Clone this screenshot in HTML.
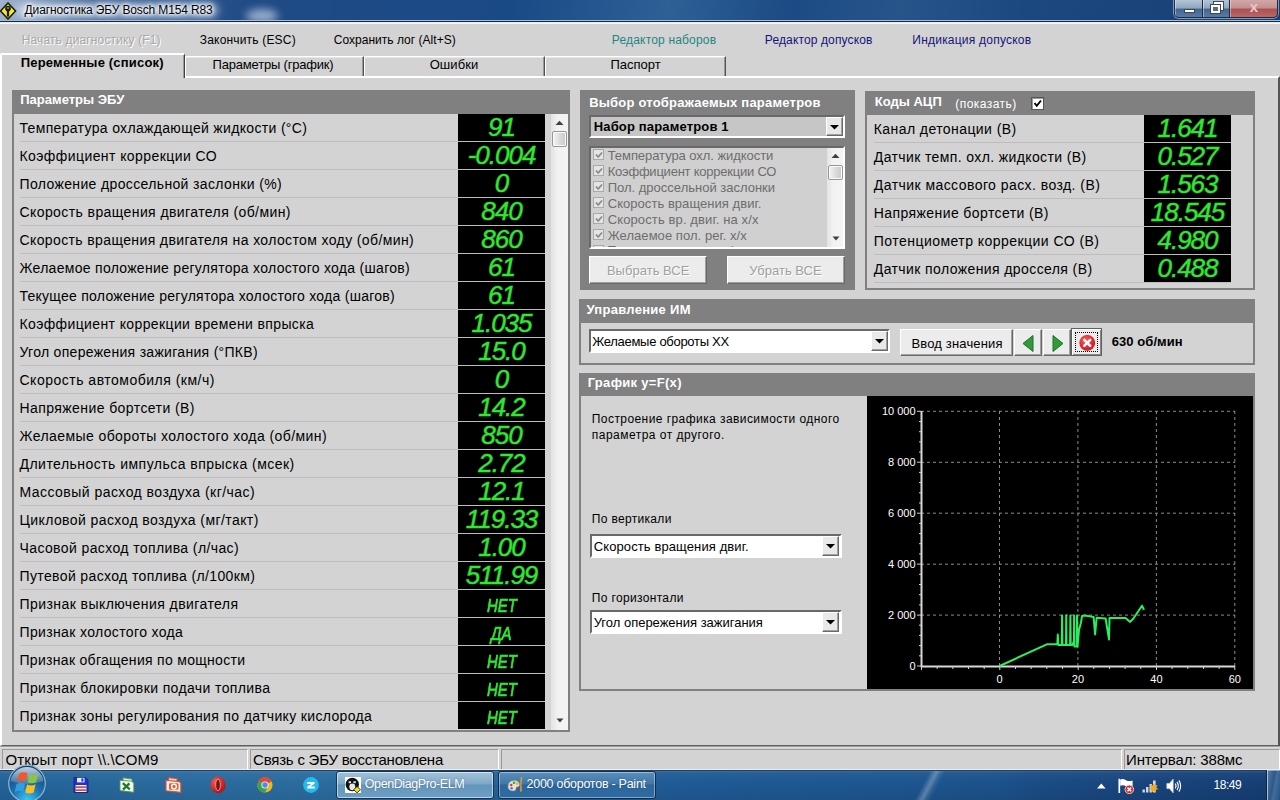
<!DOCTYPE html>
<html lang="ru">
<head>
<meta charset="utf-8">
<title>Диагностика ЭБУ Bosch M154 R83</title>
<style>
*{box-sizing:border-box;margin:0;padding:0}
html,body{width:1280px;height:800px;overflow:hidden;background:#d3d3d3;font-family:"Liberation Sans",sans-serif;font-size:14px;color:#000}
.a{position:absolute;display:block}
.t{position:absolute;white-space:nowrap}
#titlebar{left:0;top:0;width:1280px;height:20px;overflow:hidden;background:linear-gradient(100deg,#a3b4cc 0%,#8099bb 2.5%,#3d6294 7%,#1f4a85 20%,#1a4a86 40%,#2e6096 52%,#1c4a84 62%,#27558a 70%,#1c4880 80%,#173f73 100%)}
#wbtns{left:1174px;top:0;width:104px;height:18px;border:1px solid #1d2c40;border-top:0;border-radius:0 0 5px 5px;overflow:hidden;box-shadow:0 0 0 1px rgba(255,255,255,.45)}
.wb{top:0;height:18px;background:linear-gradient(#b4c4d6 0,#8ea6c0 45%,#44658f 50%,#5a7da6 100%);border-right:1px solid #1d2c40;box-shadow:inset 1px 0 0 rgba(255,255,255,.4)}
.wb.wc{background:linear-gradient(#d2a8a8 0,#c48e8e 45%,#ad5050 50%,#b96a6a 100%);border-right:0}
.val{height:27px;background:#000;color:#2fe82f;text-align:center;font-style:italic;font-size:26px;line-height:27px;letter-spacing:-1px;-webkit-text-stroke:.45px #2fe82f;white-space:nowrap;overflow:hidden}
.val .w{display:inline-block;font-size:18px;line-height:28px;letter-spacing:0;transform:scaleX(.83);position:relative;top:0;left:0;-webkit-text-stroke:.7px #2fe82f}
.ct{font:11px "Liberation Sans",sans-serif;fill:#fff}
#taskbar{left:0;top:769px;width:1280px;height:31px;border-top:1px solid #e8eef4;background:linear-gradient(#1b4366 0,#1b4366 1px,rgba(255,255,255,.12) 1px,rgba(255,255,255,.04) 3px,rgba(0,0,0,0) 12px,rgba(0,0,0,.08) 100%),linear-gradient(90deg,#236398 0,#2a6a9e 12%,#2b6c9f 25%,#24629b 40%,#1f5a95 55%,#1d5690 70%,#1c528b 78%,#1b4c85 81%,#18447c 90%,#163e74 100%)}

</style>
</head>
<body>
<div id="titlebar" class="a">
<div class="a" style="left:14px;top:3px;width:204px;height:15px;background:rgba(225,236,250,.62);filter:blur(5px);border-radius:8px"></div>
<div class="a" style="left:246px;top:9px;width:32px;height:14px;background:rgba(225,232,246,.62);filter:blur(4px);border-radius:50%"></div>
<span class="t" style='left:24.6px;top:2.4px;font-size:12px;line-height:16px;letter-spacing:-0.14px;text-shadow:0 0 5px #fff,0 0 5px #fff,0 0 8px #fff,0 0 3px #fff;'>Диагностика ЭБУ Bosch M154 R83</span>
<svg class="a" style="left:0;top:2px" width="17" height="18" viewBox="0 0 17 18"><path d="M8 1 L15.6 9 L8 17 L0.5 9 Z" fill="#f6ea1e" stroke="#151515" stroke-width="1.5"/><circle cx="8" cy="6.6" r="2.8" fill="#151515"/><path d="M8 8 V14.6" stroke="#151515" stroke-width="2.2"/><path d="M6.9 6 H9.1" stroke="#f6ea1e" stroke-width="1"/></svg>
<div class="a" id="wbtns"><div class="a wb" style="left:0;width:28px"><i class="a" style="left:9px;top:9px;width:11px;height:4px;background:#fff;border:1px solid #3a4a5a"></i></div><div class="a wb" style="left:28px;width:27px"><i class="a" style="left:11px;top:2px;width:9px;height:8px;border:2px solid #fff;outline:1px solid #3a4a5a"></i><i class="a" style="left:8px;top:5px;width:9px;height:8px;border:2px solid #fff;background:#54708f;outline:1px solid #3a4a5a"></i></div><div class="a wb wc" style="left:55px;width:48px"><span class="a" style="left:0;width:48px;top:-3px;text-align:center;font:bold 15px/20px 'Liberation Sans',sans-serif;color:#e8c8c8">x</span></div></div>
</div>
<div class="a" style="left:0;top:20px;width:1280px;height:1px;background:#9dbbdb"></div>
<div class="a" style="left:0;top:21px;width:1280px;height:1px;background:#1c2a3c"></div>
<div class="a" style="left:0;top:22px;width:1280px;height:2px;background:linear-gradient(#e6e6e6,#fbfbfb)"></div>
<span class="t" style='left:21.7px;top:32.1px;font-size:12px;line-height:16px;color:#a8a8a8;letter-spacing:0.14px;text-shadow:1px 1px 0 #fff;'>Начать диагностику (F1)</span>
<span class="t" style='left:199.8px;top:32.1px;font-size:12px;line-height:16px;letter-spacing:0.18px;'>Закончить (ESC)</span>
<span class="t" style='left:333.8px;top:32.1px;font-size:12px;line-height:16px;letter-spacing:0.02px;'>Сохранить лог (Alt+S)</span>
<span class="t" style='left:611.8px;top:32.1px;font-size:12px;line-height:16px;color:#1f8686;letter-spacing:0.18px;'>Редактор наборов</span>
<span class="t" style='left:764.8px;top:32.1px;font-size:12px;line-height:16px;color:#14147a;letter-spacing:0.13px;'>Редактор допусков</span>
<span class="t" style='left:912.3px;top:32.1px;font-size:12px;line-height:16px;color:#14147a;letter-spacing:0.22px;'>Индикация допусков</span>
<div class="a" style="left:0px;top:76px;width:1280px;height:670px;border-top:2px solid #fff;border-left:2px solid #fff;border-right:2px solid #555;border-bottom:1px solid #606060;"></div>
<div class="a" style="left:0px;top:746px;width:1280px;height:2px;background:#dedede;border-top:1px solid #9c9c9c"></div>
<div class="a" style="left:185px;top:56px;width:179px;height:20px;border-top:1px solid #fff;border-left:1px solid #fff;border-right:1px solid #505050;box-shadow:inset -1px 0 0 #9a9a9a,inset 0 1px 0 #e6e6e6;"></div>
<span class="t" style='left:212.5px;top:56.3px;font-size:13px;line-height:17px;letter-spacing:-0.19px;'>Параметры (график)</span>
<div class="a" style="left:364px;top:56px;width:181px;height:20px;border-top:1px solid #fff;border-left:1px solid #fff;border-right:1px solid #505050;box-shadow:inset -1px 0 0 #9a9a9a,inset 0 1px 0 #e6e6e6;"></div>
<span class="t" style='left:429.7px;top:56.3px;font-size:13px;line-height:17px;letter-spacing:0.06px;'>Ошибки</span>
<div class="a" style="left:545px;top:56px;width:181px;height:20px;border-top:1px solid #fff;border-left:1px solid #fff;border-right:1px solid #505050;box-shadow:inset -1px 0 0 #9a9a9a,inset 0 1px 0 #e6e6e6;"></div>
<span class="t" style='left:610.5px;top:56.3px;font-size:13px;line-height:17px;'>Паспорт</span>
<div class="a" style="left:0px;top:53px;width:185px;height:25px;background:#d3d3d3;border-top:2px solid #fff;border-left:2px solid #fff;border-right:1px solid #404040;box-shadow:inset -1px 0 0 #9a9a9a;border-radius:2px 2px 0 0"></div>
<span class="t" style='left:20.8px;top:54.0px;font-size:13px;line-height:17px;font-weight:bold;letter-spacing:0.18px;'>Переменные (список)</span>
<div class="a" style="left:12px;top:90px;width:558px;height:642px;border:2px solid #808080;"></div>
<div class="a" style="left:12px;top:90px;width:558px;height:24px;background:#808080;"></div>
<span class="t" style='left:20.2px;top:91.0px;font-size:13px;line-height:17px;font-weight:bold;color:#fff;letter-spacing:0.02px;'>Параметры ЭБУ</span>
<span class="t" style='left:19.5px;top:118.8px;font-size:14px;line-height:18px;letter-spacing:0.33px;'>Температура охлаждающей жидкости (°C)</span>
<div class="a" style="left:20px;top:141px;width:525px;height:1px;background:#bdbdbd"></div>
<div class="a val" style="left:458px;top:114px;width:87px">91</div>
<span class="t" style='left:19.5px;top:146.8px;font-size:14px;line-height:18px;letter-spacing:0.42px;'>Коэффициент коррекции СО</span>
<div class="a" style="left:20px;top:169px;width:525px;height:1px;background:#bdbdbd"></div>
<div class="a val" style="left:458px;top:142px;width:87px">-0.004</div>
<span class="t" style='left:19.5px;top:174.8px;font-size:14px;line-height:18px;letter-spacing:0.36px;'>Положение дроссельной заслонки (%)</span>
<div class="a" style="left:20px;top:197px;width:525px;height:1px;background:#bdbdbd"></div>
<div class="a val" style="left:458px;top:170px;width:87px">0</div>
<span class="t" style='left:19.5px;top:202.8px;font-size:14px;line-height:18px;letter-spacing:0.41px;'>Скорость вращения двигателя (об/мин)</span>
<div class="a" style="left:20px;top:225px;width:525px;height:1px;background:#bdbdbd"></div>
<div class="a val" style="left:458px;top:198px;width:87px">840</div>
<span class="t" style='left:19.5px;top:230.8px;font-size:14px;line-height:18px;letter-spacing:0.38px;'>Скорость вращения двигателя на холостом ходу (об/мин)</span>
<div class="a" style="left:20px;top:253px;width:525px;height:1px;background:#bdbdbd"></div>
<div class="a val" style="left:458px;top:226px;width:87px">860</div>
<span class="t" style='left:19.5px;top:258.8px;font-size:14px;line-height:18px;letter-spacing:0.29px;'>Желаемое положение регулятора холостого хода (шагов)</span>
<div class="a" style="left:20px;top:281px;width:525px;height:1px;background:#bdbdbd"></div>
<div class="a val" style="left:458px;top:254px;width:87px">61</div>
<span class="t" style='left:19.5px;top:286.8px;font-size:14px;line-height:18px;letter-spacing:0.26px;'>Текущее положение регулятора холостого хода (шагов)</span>
<div class="a" style="left:20px;top:309px;width:525px;height:1px;background:#bdbdbd"></div>
<div class="a val" style="left:458px;top:282px;width:87px">61</div>
<span class="t" style='left:19.5px;top:314.8px;font-size:14px;line-height:18px;letter-spacing:0.38px;'>Коэффициент коррекции времени впрыска</span>
<div class="a" style="left:20px;top:337px;width:525px;height:1px;background:#bdbdbd"></div>
<div class="a val" style="left:458px;top:310px;width:87px">1.035</div>
<span class="t" style='left:19.5px;top:342.8px;font-size:14px;line-height:18px;letter-spacing:0.30px;'>Угол опережения зажигания (°ПКВ)</span>
<div class="a" style="left:20px;top:365px;width:525px;height:1px;background:#bdbdbd"></div>
<div class="a val" style="left:458px;top:338px;width:87px">15.0</div>
<span class="t" style='left:19.5px;top:370.8px;font-size:14px;line-height:18px;letter-spacing:0.50px;'>Скорость автомобиля (км/ч)</span>
<div class="a" style="left:20px;top:393px;width:525px;height:1px;background:#bdbdbd"></div>
<div class="a val" style="left:458px;top:366px;width:87px">0</div>
<span class="t" style='left:19.5px;top:398.8px;font-size:14px;line-height:18px;letter-spacing:0.42px;'>Напряжение бортсети (В)</span>
<div class="a" style="left:20px;top:421px;width:525px;height:1px;background:#bdbdbd"></div>
<div class="a val" style="left:458px;top:394px;width:87px">14.2</div>
<span class="t" style='left:19.5px;top:426.8px;font-size:14px;line-height:18px;letter-spacing:0.42px;'>Желаемые обороты холостого хода (об/мин)</span>
<div class="a" style="left:20px;top:449px;width:525px;height:1px;background:#bdbdbd"></div>
<div class="a val" style="left:458px;top:422px;width:87px">850</div>
<span class="t" style='left:19.5px;top:454.8px;font-size:14px;line-height:18px;letter-spacing:0.47px;'>Длительность импульса впрыска (мсек)</span>
<div class="a" style="left:20px;top:477px;width:525px;height:1px;background:#bdbdbd"></div>
<div class="a val" style="left:458px;top:450px;width:87px">2.72</div>
<span class="t" style='left:19.5px;top:482.8px;font-size:14px;line-height:18px;letter-spacing:0.46px;'>Массовый расход воздуха (кг/час)</span>
<div class="a" style="left:20px;top:505px;width:525px;height:1px;background:#bdbdbd"></div>
<div class="a val" style="left:458px;top:478px;width:87px">12.1</div>
<span class="t" style='left:19.5px;top:510.8px;font-size:14px;line-height:18px;letter-spacing:0.41px;'>Цикловой расход воздуха (мг/такт)</span>
<div class="a" style="left:20px;top:533px;width:525px;height:1px;background:#bdbdbd"></div>
<div class="a val" style="left:458px;top:506px;width:87px">119.33</div>
<span class="t" style='left:19.5px;top:538.8px;font-size:14px;line-height:18px;letter-spacing:0.39px;'>Часовой расход топлива (л/час)</span>
<div class="a" style="left:20px;top:561px;width:525px;height:1px;background:#bdbdbd"></div>
<div class="a val" style="left:458px;top:534px;width:87px">1.00</div>
<span class="t" style='left:19.5px;top:566.8px;font-size:14px;line-height:18px;letter-spacing:0.37px;'>Путевой расход топлива (л/100км)</span>
<div class="a" style="left:20px;top:589px;width:525px;height:1px;background:#bdbdbd"></div>
<div class="a val" style="left:458px;top:562px;width:87px">511.99</div>
<span class="t" style='left:19.5px;top:594.8px;font-size:14px;line-height:18px;letter-spacing:0.43px;'>Признак выключения двигателя</span>
<div class="a" style="left:20px;top:617px;width:525px;height:1px;background:#bdbdbd"></div>
<div class="a val"  style="left:458px;top:590px;width:87px"><span class="w">НЕТ</span></div>
<span class="t" style='left:19.5px;top:622.8px;font-size:14px;line-height:18px;letter-spacing:0.36px;'>Признак холостого хода</span>
<div class="a" style="left:20px;top:645px;width:525px;height:1px;background:#bdbdbd"></div>
<div class="a val"  style="left:458px;top:618px;width:87px"><span class="w">ДА</span></div>
<span class="t" style='left:19.5px;top:650.8px;font-size:14px;line-height:18px;letter-spacing:0.30px;'>Признак обгащения по мощности</span>
<div class="a" style="left:20px;top:673px;width:525px;height:1px;background:#bdbdbd"></div>
<div class="a val"  style="left:458px;top:646px;width:87px"><span class="w">НЕТ</span></div>
<span class="t" style='left:19.5px;top:678.8px;font-size:14px;line-height:18px;letter-spacing:0.38px;'>Признак блокировки подачи топлива</span>
<div class="a" style="left:20px;top:701px;width:525px;height:1px;background:#bdbdbd"></div>
<div class="a val"  style="left:458px;top:674px;width:87px"><span class="w">НЕТ</span></div>
<span class="t" style='left:19.5px;top:706.8px;font-size:14px;line-height:18px;letter-spacing:0.35px;'>Признак зоны регулирования по датчику кислорода</span>
<div class="a val"  style="left:458px;top:702px;width:87px"><span class="w">НЕТ</span></div>
<div class="a" style="left:551px;top:114px;width:17px;height:616px;background:linear-gradient(90deg,#e3e3e3,#f2f2f2 40%,#f4f4f4);"></div>
<div class="a" style="left:552px;top:131px;width:15px;height:16px;border:1px solid #979797;border-radius:2px;background:linear-gradient(90deg,#f3f3f3,#dcdcdc 50%,#c9c9c9);box-shadow:inset 0 0 0 1px #fafafa"></div>
<svg class="a" style="left:555px;top:120px" width="9" height="5"><path d="M0.5 5 L4.5 0.8 L8.5 5Z" fill="#404040"/></svg>
<svg class="a" style="left:556px;top:718px" width="8" height="5"><path d="M0.5 0.5 L7.5 0.5 L4 4.5Z" fill="#404040"/></svg>
<div class="a" style="left:580px;top:90px;width:275px;height:200px;background:#808080;"></div>
<span class="t" style='left:589.2px;top:94.0px;font-size:13px;line-height:17px;font-weight:bold;color:#fff;letter-spacing:0.21px;'>Выбор отображаемых параметров</span>
<div class="a" style="left:589px;top:115px;width:256px;height:23px;background:#c6c6c6;border:2px solid;border-color:#696969 #fff #fff #696969;"></div>
<span class="t" style='left:593.7px;top:117.6px;font-size:13px;line-height:17px;font-weight:bold;letter-spacing:0.16px;'>Набор параметров 1</span>
<div class="a" style="left:826px;top:117px;width:17px;height:19px;background:#e9e9e9;border:1px solid;border-color:#fff #6a6a6a #6a6a6a #fff;box-shadow:inset -1px -1px 0 #a0a0a0"><svg class="a" style="left:3px;top:7px" width="9" height="5"><path d="M0 0H9L4.5 4.6Z" fill="#000"/></svg></div>
<div class="a" style="left:589px;top:146px;width:256px;height:103px;background:#d0d0d0;border:2px solid;border-color:#696969 #fff #fff #696969;overflow:hidden"></div>
<div class="a" style="left:593px;top:149px;width:11px;height:11px;background:#e4e4e4;border:1px solid #a8a8a8"><svg class="a" style="left:1px;top:1px" width="8" height="8"><path d="M1 3.5 L3.2 6 L7 1.5" fill="none" stroke="#8a8a8a" stroke-width="1.7"/></svg></div>
<span class="t" style='left:607.7px;top:146.6px;font-size:13px;line-height:17px;color:#6d6d6d;letter-spacing:-0.06px;'>Температура охл. жидкости</span>
<div class="a" style="left:593px;top:165px;width:11px;height:11px;background:#e4e4e4;border:1px solid #a8a8a8"><svg class="a" style="left:1px;top:1px" width="8" height="8"><path d="M1 3.5 L3.2 6 L7 1.5" fill="none" stroke="#8a8a8a" stroke-width="1.7"/></svg></div>
<span class="t" style='left:607.7px;top:162.6px;font-size:13px;line-height:17px;color:#6d6d6d;letter-spacing:-0.23px;'>Коэффициент коррекции СО</span>
<div class="a" style="left:593px;top:181px;width:11px;height:11px;background:#e4e4e4;border:1px solid #a8a8a8"><svg class="a" style="left:1px;top:1px" width="8" height="8"><path d="M1 3.5 L3.2 6 L7 1.5" fill="none" stroke="#8a8a8a" stroke-width="1.7"/></svg></div>
<span class="t" style='left:607.7px;top:178.6px;font-size:13px;line-height:17px;color:#6d6d6d;'>Пол. дроссельной заслонки</span>
<div class="a" style="left:593px;top:197px;width:11px;height:11px;background:#e4e4e4;border:1px solid #a8a8a8"><svg class="a" style="left:1px;top:1px" width="8" height="8"><path d="M1 3.5 L3.2 6 L7 1.5" fill="none" stroke="#8a8a8a" stroke-width="1.7"/></svg></div>
<span class="t" style='left:607.7px;top:194.6px;font-size:13px;line-height:17px;color:#6d6d6d;letter-spacing:0.05px;'>Скорость вращения двиг.</span>
<div class="a" style="left:593px;top:213px;width:11px;height:11px;background:#e4e4e4;border:1px solid #a8a8a8"><svg class="a" style="left:1px;top:1px" width="8" height="8"><path d="M1 3.5 L3.2 6 L7 1.5" fill="none" stroke="#8a8a8a" stroke-width="1.7"/></svg></div>
<span class="t" style='left:607.7px;top:210.6px;font-size:13px;line-height:17px;color:#6d6d6d;letter-spacing:0.12px;'>Скорость вр. двиг. на х/х</span>
<div class="a" style="left:593px;top:229px;width:11px;height:11px;background:#e4e4e4;border:1px solid #a8a8a8"><svg class="a" style="left:1px;top:1px" width="8" height="8"><path d="M1 3.5 L3.2 6 L7 1.5" fill="none" stroke="#8a8a8a" stroke-width="1.7"/></svg></div>
<span class="t" style='left:607.7px;top:226.6px;font-size:13px;line-height:17px;color:#6d6d6d;letter-spacing:0.05px;'>Желаемое пол. рег. х/х</span>
<div class="a" style="left:593px;top:245px;width:11px;height:2px;background:#e4e4e4;border:1px solid #a8a8a8;border-bottom:0"></div>
<div class="a" style="left:607px;top:243px;width:200px;height:4px;overflow:hidden"><span class="a" style="left:1px;top:0;font-size:13px;line-height:16px;color:#6d6d6d;white-space:nowrap;letter-spacing:.3px">Текущее пол. рег. х/х</span></div>
<div class="a" style="left:827px;top:148px;width:16px;height:99px;background:linear-gradient(90deg,#e3e3e3,#f2f2f2 40%,#f4f4f4);"></div>
<div class="a" style="left:828px;top:165px;width:15px;height:15px;border:1px solid #979797;border-radius:2px;background:linear-gradient(90deg,#f3f3f3,#dcdcdc 50%,#c9c9c9);box-shadow:inset 0 0 0 1px #fafafa"></div>
<svg class="a" style="left:831px;top:153px" width="9" height="5"><path d="M0.5 5 L4.5 0.8 L8.5 5Z" fill="#404040"/></svg>
<svg class="a" style="left:832px;top:236px" width="8" height="5"><path d="M0.5 0.5 L7.5 0.5 L4 4.5Z" fill="#404040"/></svg>
<div class="a" style="left:589px;top:256px;width:118px;height:28px;background:#ececec;border:1px solid;border-color:#fff #696969 #696969 #fff;box-shadow:inset -1px -1px 0 #a0a0a0"></div>
<span class="t" style='left:606.9px;top:261.8px;font-size:13px;line-height:17px;color:#a0a0a0;letter-spacing:0.03px;text-shadow:1px 1px 0 #fff;'>Выбрать ВСЕ</span>
<div class="a" style="left:727px;top:256px;width:118px;height:28px;background:#ececec;border:1px solid;border-color:#fff #696969 #696969 #fff;box-shadow:inset -1px -1px 0 #a0a0a0"></div>
<span class="t" style='left:749.2px;top:261.8px;font-size:13px;line-height:17px;color:#a0a0a0;letter-spacing:0.03px;text-shadow:1px 1px 0 #fff;'>Убрать ВСЕ</span>
<div class="a" style="left:865px;top:91px;width:390px;height:199px;border:2px solid #808080;"></div>
<div class="a" style="left:865px;top:91px;width:390px;height:24px;background:#808080;"></div>
<span class="t" style='left:874.7px;top:93.0px;font-size:13px;line-height:17px;font-weight:bold;color:#fff;letter-spacing:0.02px;'>Коды АЦП</span>
<span class="t" style='left:955.3px;top:95.8px;font-size:12px;line-height:16px;color:#fff;letter-spacing:0.45px;'>(показать)</span>
<div class="a" style="left:1031px;top:97px;width:13px;height:13px;background:#fff;border:1px solid #555;box-shadow:inset 1px 1px 0 #999"><svg class="a" style="left:1px;top:1px" width="9" height="9"><path d="M1.5 4 L3.8 6.8 L8 1.5" fill="none" stroke="#000" stroke-width="1.9"/></svg></div>
<span class="t" style='left:873.8px;top:119.8px;font-size:14px;line-height:18px;letter-spacing:0.42px;'>Канал детонации (В)</span>
<div class="a" style="left:874px;top:142px;width:357px;height:1px;background:#bdbdbd"></div>
<div class="a val" style="left:1144px;top:115px;width:87px">1.641</div>
<span class="t" style='left:873.8px;top:147.8px;font-size:14px;line-height:18px;letter-spacing:0.38px;'>Датчик темп. охл. жидкости (В)</span>
<div class="a" style="left:874px;top:170px;width:357px;height:1px;background:#bdbdbd"></div>
<div class="a val" style="left:1144px;top:143px;width:87px">0.527</div>
<span class="t" style='left:873.8px;top:175.8px;font-size:14px;line-height:18px;letter-spacing:0.44px;'>Датчик массового расх. возд. (В)</span>
<div class="a" style="left:874px;top:198px;width:357px;height:1px;background:#bdbdbd"></div>
<div class="a val" style="left:1144px;top:171px;width:87px">1.563</div>
<span class="t" style='left:873.8px;top:203.8px;font-size:14px;line-height:18px;letter-spacing:0.41px;'>Напряжение бортсети (В)</span>
<div class="a" style="left:874px;top:226px;width:357px;height:1px;background:#bdbdbd"></div>
<div class="a val" style="left:1144px;top:199px;width:87px">18.545</div>
<span class="t" style='left:873.8px;top:231.8px;font-size:14px;line-height:18px;letter-spacing:0.46px;'>Потенциометр коррекции СО (В)</span>
<div class="a" style="left:874px;top:254px;width:357px;height:1px;background:#bdbdbd"></div>
<div class="a val" style="left:1144px;top:227px;width:87px">4.980</div>
<span class="t" style='left:873.8px;top:259.8px;font-size:14px;line-height:18px;letter-spacing:0.40px;'>Датчик положения дросселя (В)</span>
<div class="a" style="left:874px;top:282px;width:357px;height:1px;background:#bdbdbd"></div>
<div class="a val" style="left:1144px;top:255px;width:87px">0.488</div>
<div class="a" style="left:579px;top:299px;width:676px;height:66px;border:2px solid #808080;"></div>
<div class="a" style="left:579px;top:299px;width:676px;height:24px;background:#808080;"></div>
<span class="t" style='left:586.5px;top:301.0px;font-size:13px;line-height:17px;font-weight:bold;color:#fff;letter-spacing:0.28px;'>Управление ИМ</span>
<div class="a" style="left:589px;top:329px;width:301px;height:24px;background:#fff;border:2px solid;border-color:#696969 #fff #fff #696969;"></div>
<span class="t" style='left:592.2px;top:332.6px;font-size:13px;line-height:17px;letter-spacing:-0.29px;'>Желаемые обороты ХХ</span>
<div class="a" style="left:871px;top:331px;width:17px;height:20px;background:#e9e9e9;border:1px solid;border-color:#fff #6a6a6a #6a6a6a #fff;box-shadow:inset -1px -1px 0 #a0a0a0"><svg class="a" style="left:3px;top:7px" width="9" height="5"><path d="M0 0H9L4.5 4.6Z" fill="#000"/></svg></div>
<div class="a" style="left:900px;top:329px;width:113px;height:27px;background:#ececec;border:1px solid;border-color:#fff #696969 #696969 #fff;box-shadow:inset -1px -1px 0 #a0a0a0;"></div>
<span class="t" style='left:911.5px;top:334.7px;font-size:13px;line-height:17px;letter-spacing:0.16px;'>Ввод значения</span>
<div class="a" style="left:1014px;top:329px;width:28px;height:27px;background:#ececec;border:1px solid;border-color:#fff #696969 #696969 #fff;box-shadow:inset -1px -1px 0 #a0a0a0;"><svg class="a" style="left:7px;top:5px" width="12" height="17"><path d="M11 0.5 L1 8.5 L11 16.5Z" fill="#2f9b3a" stroke="#1e6f2a" stroke-width="1"/></svg></div>
<div class="a" style="left:1043px;top:329px;width:28px;height:27px;background:#ececec;border:1px solid;border-color:#fff #696969 #696969 #fff;box-shadow:inset -1px -1px 0 #a0a0a0;"><svg class="a" style="left:8px;top:5px" width="12" height="17"><path d="M1 0.5 L11 8.5 L1 16.5Z" fill="#2f9b3a" stroke="#1e6f2a" stroke-width="1"/></svg></div>
<div class="a" style="left:1071px;top:328px;width:31px;height:28px;background:#ececec;border:1px solid #606060;box-shadow:inset 1px 1px 0 #fff,inset -1px -1px 0 #888;"><div class="a" style="left:3px;top:3px;width:23px;height:20px;border:1px dotted #000"></div><svg class="a" style="left:7px;top:6px" width="16" height="16" viewBox="0 0 16 16"><defs><radialGradient id="rg" cx=".4" cy=".35" r=".7"><stop offset="0" stop-color="#ff5a5a"/><stop offset="1" stop-color="#d40d1d"/></radialGradient></defs><circle cx="8.2" cy="7.8" r="7.9" fill="url(#rg)"/><path d="M5.2 4.8 L11.2 10.8 M11.2 4.8 L5.2 10.8" stroke="#fff" stroke-width="2.6" stroke-linecap="round"/></svg></div>
<span class="t" style='left:1111.7px;top:333.3px;font-size:13px;line-height:17px;font-weight:bold;letter-spacing:0.07px;'>630 об/мин</span>
<div class="a" style="left:579px;top:373px;width:676px;height:318px;border:2px solid #808080;"></div>
<div class="a" style="left:579px;top:373px;width:676px;height:23px;background:#808080;"></div>
<span class="t" style='left:587.7px;top:373.6px;font-size:13px;line-height:17px;font-weight:bold;color:#fff;letter-spacing:0.30px;'>График y=F(x)</span>
<span class="t" style='left:591.8px;top:410.6px;font-size:12px;line-height:16px;letter-spacing:0.43px;'>Построение графика зависимости одного</span>
<span class="t" style='left:591.8px;top:426.6px;font-size:12px;line-height:16px;letter-spacing:0.48px;'>параметра от другого.</span>
<span class="t" style='left:591.8px;top:510.8px;font-size:12px;line-height:16px;letter-spacing:0.32px;'>По вертикали</span>
<span class="t" style='left:591.8px;top:589.8px;font-size:12px;line-height:16px;letter-spacing:0.34px;'>По горизонтали</span>
<div class="a" style="left:590px;top:534px;width:252px;height:24px;background:#fff;border:2px solid;border-color:#696969 #fff #fff #696969;"></div>
<span class="t" style='left:593.7px;top:537.8px;font-size:13px;line-height:17px;letter-spacing:0.11px;'>Скорость вращения двиг.</span>
<div class="a" style="left:822px;top:536px;width:17px;height:20px;background:#e9e9e9;border:1px solid;border-color:#fff #6a6a6a #6a6a6a #fff;box-shadow:inset -1px -1px 0 #a0a0a0"><svg class="a" style="left:3px;top:7px" width="9" height="5"><path d="M0 0H9L4.5 4.6Z" fill="#000"/></svg></div>
<div class="a" style="left:590px;top:610px;width:252px;height:24px;background:#fff;border:2px solid;border-color:#696969 #fff #fff #696969;"></div>
<span class="t" style='left:593.7px;top:613.5px;font-size:13px;line-height:17px;letter-spacing:-0.01px;'>Угол опережения зажигания</span>
<div class="a" style="left:822px;top:612px;width:17px;height:20px;background:#e9e9e9;border:1px solid;border-color:#fff #6a6a6a #6a6a6a #fff;box-shadow:inset -1px -1px 0 #a0a0a0"><svg class="a" style="left:3px;top:7px" width="9" height="5"><path d="M0 0H9L4.5 4.6Z" fill="#000"/></svg></div>
<svg class="a" style="left:867px;top:396px" width="386" height="293" viewBox="867 396 386 293"><rect x="867" y="396" width="386" height="293" fill="#000"/><line x1="999.5" y1="411" x2="999.5" y2="666" stroke="#8c8c8c" stroke-width="1" stroke-dasharray="3 3"/><line x1="1077.9" y1="411" x2="1077.9" y2="666" stroke="#8c8c8c" stroke-width="1" stroke-dasharray="3 3"/><line x1="1156.4" y1="411" x2="1156.4" y2="666" stroke="#8c8c8c" stroke-width="1" stroke-dasharray="3 3"/><line x1="1234.8" y1="411" x2="1234.8" y2="666" stroke="#8c8c8c" stroke-width="1" stroke-dasharray="3 3"/><line x1="921" y1="411.3" x2="1235" y2="411.3" stroke="#8c8c8c" stroke-width="1" stroke-dasharray="3 3"/><line x1="921" y1="462.3" x2="1235" y2="462.3" stroke="#8c8c8c" stroke-width="1" stroke-dasharray="3 3"/><line x1="921" y1="513.2" x2="1235" y2="513.2" stroke="#8c8c8c" stroke-width="1" stroke-dasharray="3 3"/><line x1="921" y1="564.2" x2="1235" y2="564.2" stroke="#8c8c8c" stroke-width="1" stroke-dasharray="3 3"/><line x1="921" y1="615.1" x2="1235" y2="615.1" stroke="#8c8c8c" stroke-width="1" stroke-dasharray="3 3"/><path d="M921.5 411 V666.5 H1235" fill="none" stroke="#d8d8d8" stroke-width="2"/><path d="M921.5 666 v4M937.2 666 v3M952.8 666 v3M968.5 666 v3M984.2 666 v3M999.8 666 v4M1015.5 666 v3M1031.2 666 v3M1046.8 666 v3M1062.5 666 v3M1078.2 666 v4M1093.8 666 v3M1109.5 666 v3M1125.1 666 v3M1140.8 666 v3M1156.5 666 v4M1172.1 666 v3M1187.8 666 v3M1203.5 666 v3M1219.1 666 v3M1234.8 666 v4M921 666.0 h-4M921 655.8 h-2M921 645.6 h-2M921 635.4 h-2M921 625.2 h-2M921 615.1 h-4M921 604.9 h-2M921 594.7 h-2M921 584.5 h-2M921 574.3 h-2M921 564.1 h-4M921 553.9 h-2M921 543.7 h-2M921 533.6 h-2M921 523.4 h-2M921 513.2 h-4M921 503.0 h-2M921 492.8 h-2M921 482.6 h-2M921 472.4 h-2M921 462.2 h-4M921 452.1 h-2M921 441.9 h-2M921 431.7 h-2M921 421.5 h-2M921 411.3 h-4" stroke="#d0d0d0" stroke-width="1" fill="none"/><text x="915.6" y="415.3" text-anchor="end" class="ct">10 000</text><text x="915.6" y="466.3" text-anchor="end" class="ct">8 000</text><text x="915.6" y="517.2" text-anchor="end" class="ct">6 000</text><text x="915.6" y="568.2" text-anchor="end" class="ct">4 000</text><text x="915.6" y="619.1" text-anchor="end" class="ct">2 000</text><text x="915.6" y="670" text-anchor="end" class="ct">0</text><text x="999.5" y="683" text-anchor="middle" class="ct">0</text><text x="1077.9" y="683" text-anchor="middle" class="ct">20</text><text x="1156.4" y="683" text-anchor="middle" class="ct">40</text><text x="1234.8" y="683" text-anchor="middle" class="ct">60</text><polyline points="999.6,666 1046.8,644.3 1057.3,644.3 1057.8,634.5 1058.3,645 1061.8,645 1062.1,615.4 1062.4,645 1066,645 1066.25,615.4 1066.5,645 1070.1,645 1070.4,615.4 1070.7,645 1072.5,645 1074,640.5 1074.1,615.4 1074.4,646.5 1076.8,646.5 1077,615.4 1077.5,646.5 1079,630 1081,622.5 1082,616 1085,615.6 1093.6,617 1095.1,634.5 1096.6,617.8 1105.6,618.5 1109,639.4 1109.5,618 1125.5,618 1130.1,621.9 1133.4,618.5 1142,605.7 1144,609.9" fill="none" stroke="#27f060" stroke-width="2" stroke-linejoin="round"/></svg>
<div class="a" style="left:0px;top:748px;width:1280px;height:22px;background:#d3d3d3;"></div>
<div class="a" style="left:2px;top:749px;width:246px;height:21px;border:1px solid;border-color:#9a9a9a #fff #fff #9a9a9a;"></div>
<div class="a" style="left:250px;top:749px;width:249px;height:21px;border:1px solid;border-color:#9a9a9a #fff #fff #9a9a9a;"></div>
<div class="a" style="left:501px;top:749px;width:621px;height:21px;border:1px solid;border-color:#9a9a9a #fff #fff #9a9a9a;"></div>
<div class="a" style="left:1124px;top:749px;width:156px;height:21px;border:1px solid;border-color:#9a9a9a #fff #fff #9a9a9a;"></div>
<span class="t" style='left:5.6px;top:749.9px;font-size:15px;line-height:19px;letter-spacing:0.11px;'>Открыт порт \\.\COM9</span>
<span class="t" style='left:253.1px;top:749.9px;font-size:15px;line-height:19px;letter-spacing:-0.22px;'>Связь с ЭБУ восстановлена</span>
<span class="t" style='left:1126.1px;top:749.9px;font-size:15px;line-height:19px;letter-spacing:-0.15px;'>Интервал: 388мс</span>
<div id="taskbar" class="a"><div class="a" style="left:922px;top:1px;width:16px;height:30px;transform:skewX(-28deg);background:linear-gradient(90deg,rgba(255,255,255,0),rgba(255,255,255,.28) 45%,rgba(255,255,255,.1) 70%,rgba(255,255,255,0))"></div></div>
<svg class="a" style="left:7px;top:764px" width="40" height="36" viewBox="0 0 40 36"><defs><radialGradient id="og" cx=".5" cy=".95" r=".95"><stop offset="0" stop-color="#3cc8f4"/><stop offset=".45" stop-color="#1d6fb0"/><stop offset="1" stop-color="#17426f"/></radialGradient><linearGradient id="oh" x1="0" y1="0" x2="0" y2="1"><stop offset="0" stop-color="#fff" stop-opacity=".75"/><stop offset="1" stop-color="#fff" stop-opacity=".12"/></linearGradient></defs><circle cx="20" cy="19.5" r="18.3" fill="url(#og)" stroke="#8fb6d6" stroke-width="1.2"/><path d="M3.5 17 A16.7 16.7 0 0 1 36.5 17 Q20 23 3.5 17Z" fill="url(#oh)"/><g transform="translate(20 18.6) scale(1.17) translate(-19.2 -18.2)"><path d="M12.5 10.5 Q16 8.5 19.5 10.3 L18 17.3 Q14.5 15.7 10.8 17.5Z" fill="#f0582a"/><path d="M21.3 11 Q25 12.8 28.8 10.8 L27 17.8 Q23.5 19.5 19.7 17.9Z" fill="#8cc63e"/><path d="M10.3 19.3 Q14 17.5 17.6 19.1 L15.9 26 Q12.4 24.4 8.7 26.2Z" fill="#2f9fe0"/><path d="M19.3 19.8 Q23 21.5 26.6 19.6 L24.9 26.6 Q21.3 28.3 17.6 26.6Z" fill="#fbc11a"/></g></svg>
<svg class="a" style="left:73px;top:777px" width="16" height="16" viewBox="0 0 16 16"><path d="M1 0.5H12.5L15 3V15.5H1Z" fill="#2134c8" stroke="#16207c" stroke-width=".8"/><rect x="4" y="0.8" width="7.5" height="4.6" fill="#e9ecf5"/><rect x="8.4" y="1.4" width="2" height="3.2" fill="#2134c8"/><rect x="2.6" y="8" width="10.8" height="7" fill="#f4f4f4"/><rect x="2.6" y="9.3" width="10.8" height="1.6" fill="#d43b4a"/><rect x="2.6" y="12.3" width="10.8" height="1.6" fill="#d43b4a"/></svg>
<svg class="a" style="left:119px;top:777px" width="16" height="16" viewBox="0 0 16 16"><path d="M4 0.8 L13 2 V12 L4 13.2Z" fill="#dfeede" stroke="#4d9a52" stroke-width=".9"/><path d="M1 3.2 L12.5 4.2 L14.8 6 V15.3 L1 13.6Z" fill="#f3f8f2" stroke="#4d9a52" stroke-width=".9"/><path d="M3.8 6.2 L10.8 12.4 M10.4 6.4 L4 12.6" stroke="#1f7a2c" stroke-width="2.3"/></svg>
<svg class="a" style="left:165px;top:777px" width="17" height="16" viewBox="0 0 17 16"><path d="M3.5 0.8 L12 1.6 V11 L3.5 11.8Z" fill="#f5d3c8" stroke="#d8532f" stroke-width="1"/><path d="M1 3.3 L14 4.6 L15.8 6 V15.3 L1 13.8Z" fill="#fbeee9" stroke="#d8532f" stroke-width="1.1"/><rect x="4" y="6.2" width="9.5" height="6.6" rx="1" fill="#e0603a"/><circle cx="9" cy="9.5" r="2.4" fill="none" stroke="#fff" stroke-width="1.4"/></svg>
<svg class="a" style="left:209px;top:776px" width="18" height="18" viewBox="0 0 18 18"><defs><radialGradient id="opg" cx=".35" cy=".3" r=".8"><stop offset="0" stop-color="#ff5a4a"/><stop offset="1" stop-color="#a80a12"/></radialGradient></defs><ellipse cx="9" cy="9" rx="7.6" ry="8.2" fill="url(#opg)"/><ellipse cx="9" cy="9" rx="2.3" ry="5.7" fill="#7d1016" stroke="#f0b4b0" stroke-width=".7"/></svg>
<svg class="a" style="left:257px;top:777px" width="16" height="16" viewBox="0 0 16 16"><circle cx="8" cy="8" r="7.6" fill="#e8b923"/><path d="M8 8 L1.4 4.2 A7.6 7.6 0 0 1 14.6 4.2Z" fill="#dd4b3a"/><path d="M8 8 L1.4 4.2 A7.6 7.6 0 0 0 8 15.6 L11 9.8Z" fill="#3da24a"/><path d="M1.4 4.2 A7.6 7.6 0 0 1 14.6 4.2 L8 4.4Z" fill="#dd4b3a"/><circle cx="8" cy="8" r="3.6" fill="#f4f4f4"/><circle cx="8" cy="8" r="2.7" fill="#4a8af0"/></svg>
<svg class="a" style="left:303px;top:777px" width="16" height="16" viewBox="0 0 16 16"><circle cx="8" cy="8" r="7.9" fill="#25b9ee"/><path d="M4.2 5 H11.6 V6.8 L7.3 9.5 H11.8 V11.6 H4.2 V9.6 L8.4 7 H4.2Z" fill="#fff"/></svg>
<div class="a" style="left:336px;top:771px;width:158px;height:28px;border:1px solid #16334f;border-radius:3px;background:linear-gradient(#a3c3da 0,#7fa9c9 45%,#6496bd 50%,#6d9fc4 100%);box-shadow:inset 0 0 0 1px rgba(255,255,255,.55)"></div>
<svg class="a" style="left:345px;top:777px" width="16" height="16" viewBox="0 0 16 16"><rect width="16" height="16" fill="#fff"/><circle cx="7.3" cy="7.5" r="6.7" fill="#111"/><ellipse cx="7.3" cy="9.8" rx="3" ry="3.4" fill="#e8e8e8"/><rect x="3.6" y="4.2" width="2.4" height="2" fill="#ddd"/><rect x="8.4" y="4.2" width="2.4" height="2" fill="#ddd"/><path d="M12 9.5 L15.5 12.7 L12 15.8 L8.6 12.7Z" fill="#f6e21c" stroke="#111" stroke-width=".8"/></svg>
<span class="t" style='left:364.8px;top:776.1px;font-size:12.5px;line-height:16.5px;color:#fff;letter-spacing:-0.41px;text-shadow:0 0 2px rgba(0,0,0,.35);'>OpenDiagPro-ELM</span>
<div class="a" style="left:498px;top:771px;width:158px;height:28px;border:1px solid #122c48;border-radius:3px;background:linear-gradient(#5b8fbb 0,#3f78aa 45%,#2c669c 50%,#2f6ba1 100%);box-shadow:inset 0 0 0 1px rgba(255,255,255,.4)"></div>
<svg class="a" style="left:507px;top:776px" width="17" height="17" viewBox="0 0 17 17"><path d="M1 10.5 Q1 5 7 4.5 Q12.5 4.5 12.5 9 Q12.5 11 10 11 Q8.5 11.2 9 12.8 Q9 15 6 15 Q1 14.8 1 10.5Z" fill="#e9e3d2" stroke="#9b9482" stroke-width=".7"/><circle cx="4.2" cy="9" r="1.3" fill="#d4422f"/><circle cx="7" cy="6.8" r="1.3" fill="#3aa24a"/><circle cx="10" cy="7.8" r="1.2" fill="#e9b31f"/><circle cx="4.6" cy="12.3" r="1.2" fill="#3f78d8"/><path d="M13.6 1 L15.3 1.3 L14.6 9 L14.8 15.6 L13 15.6 L13.2 9Z" fill="#e8962a"/></svg>
<span class="t" style='left:526.5px;top:776.1px;font-size:12.5px;line-height:16.5px;color:#fff;letter-spacing:-0.26px;text-shadow:0 0 2px rgba(0,0,0,.35);'>2000 оборотов - Paint</span>
<svg class="a" style="left:1097px;top:783px" width="9" height="6"><path d="M0 5.6 L4.3 0.4 L8.6 5.6Z" fill="#fff"/></svg>
<svg class="a" style="left:1117px;top:778px" width="18" height="16" viewBox="0 0 18 16"><path d="M2.3 0.8 V15" stroke="#fff" stroke-width="1.7"/><path d="M3.2 1.6 Q6 0.2 9 2.2 Q12 3.8 15.6 2.6 V8.6 Q12 9.8 9 8.2 Q6 6.4 3.2 7.8Z" fill="#fff"/><circle cx="12.3" cy="11.4" r="4.3" fill="#e0262c" stroke="#fbeaea" stroke-width=".8"/><path d="M10.5 9.6 L14.1 13.2 M14.1 9.6 L10.5 13.2" stroke="#fff" stroke-width="1.5"/></svg>
<svg class="a" style="left:1142px;top:779px" width="17" height="14" viewBox="0 0 17 14"><rect x="0.5" y="10.5" width="2.4" height="3" fill="#cfd8e4"/><rect x="4" y="8" width="2.4" height="5.5" fill="#cfd8e4"/><rect x="7.5" y="5" width="2.4" height="8.5" fill="#cfd8e4"/><rect x="11" y="1.5" width="2.6" height="12" fill="#cfd8e4"/><path d="M11.7 4.2 l1.2 2.4 2.6-.6 -1.2 2.4 2 1.8 -2.6.5 .1 2.7 -2.1-1.6 -2.1 1.6 .1-2.7 -2.6-.5 2-1.8 -1.2-2.4 2.6.6Z" fill="#f5a81c"/></svg>
<svg class="a" style="left:1166px;top:778px" width="16" height="16" viewBox="0 0 16 16"><path d="M0.8 5.4 H3.4 L7.2 1 V15 L3.4 10.6 H0.8Z" fill="#fff" stroke="#c8d4e2" stroke-width=".6"/><path d="M9.2 5.6 Q10.8 8 9.2 10.4 M11 3.9 Q13.6 8 11 12.1 M12.9 2.4 Q16.4 8 12.9 13.6" fill="none" stroke="#fff" stroke-width="1.1"/></svg>
<span class="t" style='left:1213.5px;top:777.3px;font-size:12px;line-height:16px;color:#fff;letter-spacing:-0.44px;'>18:49</span>
<div class="a" style="left:1266px;top:770px;width:14px;height:30px;border-left:1px solid #0e2540;background:linear-gradient(100deg,#5a80a8 0,#2d588a 45%,#426e9c 60%,#27507f 100%);box-shadow:inset 1px 0 0 rgba(255,255,255,.55),inset 0 1px 0 rgba(255,255,255,.4)"></div>
</body>
</html>
